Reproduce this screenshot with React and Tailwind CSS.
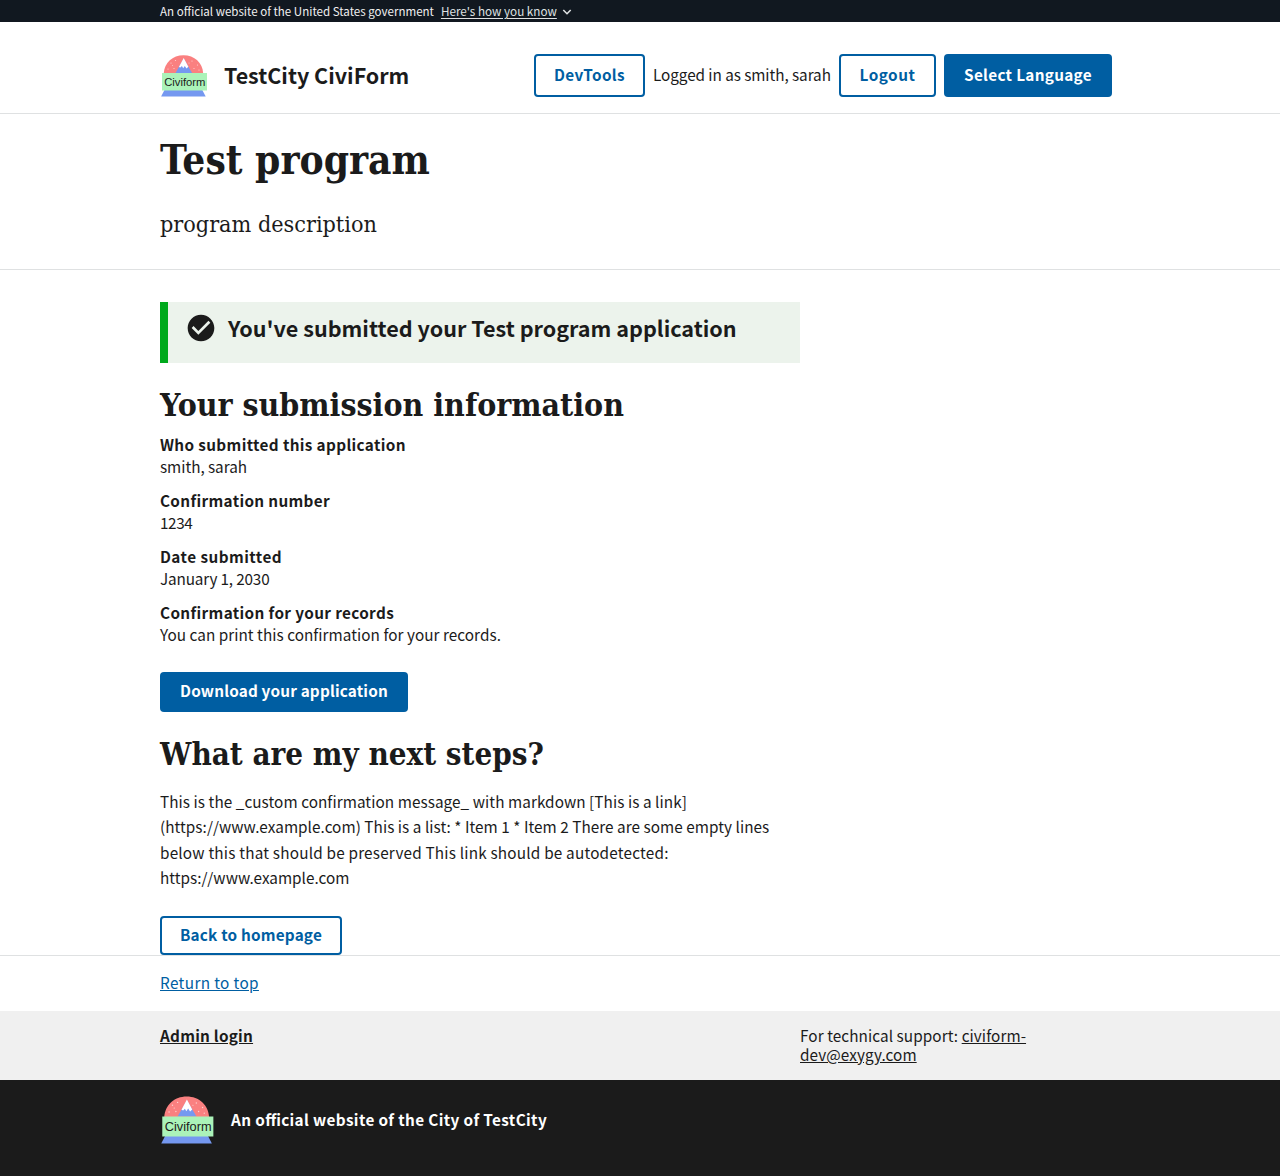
import React from "react";

const SANS = "font-['Noto_Sans_CJK_SC','Noto_Sans',sans-serif]";
const SERIF = "font-['DejaVu_Serif_Condensed','DejaVu_Serif',serif]";

function Logo({ className }) {
  return (
    <svg viewBox="0 0 48 44" className={className}>
      <path d="M3.7 19.5C4.4 8.5 12.6 1.2 23.5 1.2S42.6 8.5 43.2 19.5Z" fill="#fa8080" />
      <path d="M15.5 19 23.7 4.6 32.1 19Z" fill="#7598f0" />
      <path d="m18.9 12.9 4.8-9 4.7 8.8-1.9 1.9-1.7-2.7-1.6 2.3-1.3-2.2-1.5 1.6Z" fill="#fff" />
      <g fill="#fdd0d0">
        <circle cx="11" cy="9" r=".6" /><circle cx="15.5" cy="6.5" r=".6" /><circle cx="8" cy="15" r=".6" />
        <circle cx="14" cy="14.5" r=".6" /><circle cx="32" cy="7" r=".6" /><circle cx="34" cy="14.5" r=".6" />
        <circle cx="37.5" cy="11" r=".6" /><circle cx="39" cy="16" r=".6" /><circle cx="29" cy="9" r=".5" />
        <circle cx="12.5" cy="11.5" r=".5" />
      </g>
      <path d="M4.5 36h37.8l3.4 6.6H1.1Z" fill="#7598f0" />
      <path d="M2 18.9h45v17.6H2Z" fill="#abf3b9" />
      <text x="4.2" y="31.6" textLength="41.2" lengthAdjust="spacingAndGlyphs" fontSize="11" fontFamily="Liberation Sans, sans-serif" fill="#1b1b1b">Civiform</text>
    </svg>
  );
}

function Wrap({ className = "", children }) {
  return <div className={"mx-auto w-[960px] " + className}>{children}</div>;
}

function Info({ title, value, titleClass, valueClass }) {
  return (
    <div>
      <div className={"h-[22px] font-bold " + titleClass}>{title}</div>
      <div className={"h-[22px] " + valueClass}>{value}</div>
    </div>
  );
}

export default function App() {
  return (
    <div className={"h-[1176px] w-[1280px] overflow-hidden whitespace-nowrap bg-white text-[15.3px] leading-[22px] text-[#1b1b1b] " + SANS}>
      <div className="h-[22px] bg-[#111820] text-[#f0f0f0]">
        <Wrap className="flex items-center text-[11.55px]">
          <span>An official website of the United States government</span>
          <a className="ml-[7px] text-[11.7px] text-[#dfe1e2] underline underline-offset-2">Here's how you know</a>
          <svg viewBox="0 0 10 8" className="ml-[5px] mt-px h-2 w-2.5 fill-none stroke-[#dfe1e2] stroke-[1.6]">
            <path d="m1.3 2 3.7 3.7L8.7 2" />
          </svg>
        </Wrap>
      </div>

      <header className="h-[92px] border-b border-[#dfe1e2]">
        <Wrap className="flex items-start pt-8">
          <Logo className="h-11 w-12" />
          <span className="ml-4 mt-[10px] text-[21.48px] font-bold">TestCity CiviForm</span>
          <nav className="ml-auto mr-2 flex items-center gap-2">
            <button className="h-[43px] w-[111px] rounded border-2 border-[#005ea2] pb-1 font-bold tracking-[0.36px] text-[#005ea2]">DevTools</button>
            <span className="w-[178px] pb-1 tracking-[-0.06px]">Logged in as smith, sarah</span>
            <button className="h-[43px] w-[97px] rounded border-2 border-[#005ea2] pb-1 font-bold tracking-[0.5px] text-[#005ea2]">Logout</button>
            <button className="h-[43px] w-[168px] rounded bg-[#005ea2] pb-1 font-bold tracking-[0.31px] text-white">Select Language</button>
          </nav>
        </Wrap>
      </header>

      <section className={"h-[156px] border-b border-[#dfe1e2] " + SERIF}>
        <Wrap className="pt-[22px]">
          <h1 className="text-[40.28px] font-bold leading-[48px]">Test program</h1>
          <p className="mt-[22px] text-[23.17px] leading-[36px]">program description</p>
        </Wrap>
      </section>

      <main className="h-[685px] pt-8">
        <Wrap>
          <div className="flex h-[61px] w-[640px] border-l-8 border-[#00a91c] bg-[#ecf3ec] pl-[17px] pt-[10px]">
            <svg viewBox="0 0 24 24" className="h-8 w-8 fill-[#1b1b1b]">
              <path d="M12 2C6.48 2 2 6.48 2 12s4.48 10 10 10 10-4.48 10-10S17.52 2 12 2zm-2 15-5-5 1.41-1.41L10 14.17l7.59-7.59L19 8l-9 9z" />
            </svg>
            <h3 className="ml-[11px] text-[21.58px] font-bold leading-[32px]">You've submitted your Test program application</h3>
          </div>

          <h2 className={"mt-[22px] text-[31.77px] font-bold leading-[40px] " + SERIF}>Your submission information</h2>
          <div className="mt-2 flex flex-col gap-3">
            <Info title="Who submitted this application" value="smith, sarah" titleClass="tracking-[0.36px]" valueClass="tracking-[-0.04px]" />
            <Info title="Confirmation number" value="1234" titleClass="tracking-[0.34px]" valueClass="tracking-[-0.4px]" />
            <Info title="Date submitted" value="January 1, 2030" titleClass="tracking-[0.45px]" valueClass="tracking-[-0.16px]" />
            <Info title="Confirmation for your records" value="You can print this confirmation for your records." titleClass="tracking-[0.36px]" valueClass="tracking-[0.04px]" />
          </div>
          <button className="mt-[27px] block h-10 w-[248px] rounded bg-[#005ea2] pb-1 font-bold tracking-[0.18px] text-white">Download your application</button>

          <h2 className={"mt-[22px] text-[31.08px] font-bold leading-[40px] " + SERIF}>What are my next steps?</h2>
          <p className="mt-[15px] leading-[25.44px]">
            <span className="tracking-[0.065px]">This is the _custom confirmation message_ with markdown [This is a link]</span><br />
            <span className="tracking-[0.047px]">(https://www.example.com) This is a list: * Item 1 * Item 2 There are some empty lines</span><br />
            <span className="tracking-[0.2px]">below this that should be preserved This link should be autodetected:</span><br />
            <span>https://www.example.com</span>
          </p>
          <button className="mt-[25px] block h-[39px] w-[182px] rounded border-2 border-[#005ea2] pb-0.5 font-bold tracking-[0.2px] text-[#005ea2]">Back to homepage</button>
        </Wrap>
      </main>

      <footer>
        <div className="h-14 border-t border-[#dfe1e2]">
          <Wrap className="pt-[15px]">
            <a className="tracking-[0.37px] text-[#005ea2] underline underline-offset-1">Return to top</a>
          </Wrap>
        </div>
        <div className="h-[69px] bg-[#f0f0f0]">
          <Wrap className="grid grid-cols-[640px_240px] pt-[15px] leading-[19px]">
            <a className="font-bold tracking-[0.25px] underline underline-offset-1">Admin login</a>
            <p className="whitespace-normal tracking-[0.08px]">
              For technical support: <a className="underline underline-offset-1">civiform-dev@exygy.com</a>
            </p>
          </Wrap>
        </div>
        <div className="h-24 bg-[#1b1b1b] text-white">
          <Wrap className="flex items-center pt-[15px]">
            <Logo className="h-[50px] w-[54.5px]" />
            <span className="ml-[16.5px] pb-0.5 font-bold tracking-[0.37px] [font-feature-settings:'liga']">An official website of the City of TestCity</span>
          </Wrap>
        </div>
      </footer>
    </div>
  );
}
